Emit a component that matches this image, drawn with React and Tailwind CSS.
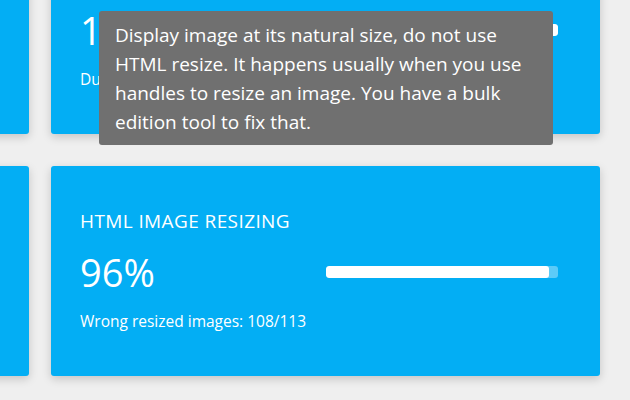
import React from 'react';

const cards = [
  { title: 'DUPLICATE IMAGES', value: '12%', label: 'Duplicate images: 14/113', ratio: 100 },
  { title: 'DUPLICATE IMAGES', value: '12%', label: 'Duplicate images: 14/113', ratio: 100 },
  { title: 'HTML IMAGE RESIZING', value: '96%', label: 'Wrong resized images: 108/113', ratio: 96 },
  { title: 'HTML IMAGE RESIZING', value: '96%', label: 'Wrong resized images: 108/113', ratio: 96 },
];

const StatCard = ({ title, value, label, ratio }) => (
  <div className="h-[210px] bg-[#03aef4] rounded-[3px] shadow-[0_3px_10px_rgba(0,0,0,0.18)] text-white pt-[42px] pl-[29px] pr-[42px]">
    <h3 className="text-[19px] leading-[26px] tracking-[0.4px]">{title}</h3>
    <div className="flex items-start justify-between mt-[15px]">
      <p className="text-[38px] leading-[46px]">{value}</p>
      <div className="w-[232px] h-[12px] mt-[17px] rounded-[3px] bg-[#5ccbf8] overflow-hidden">
        <div className="h-full bg-white rounded-[3px]" style={{ width: `${ratio}%` }} />
      </div>
    </div>
    <p className="text-[15.5px] leading-[20px] mt-[16px]">{label}</p>
  </div>
);

export default function App() {
  return (
    <div className="relative w-[630px] h-[400px] overflow-hidden bg-[#efefef] font-['Open_Sans',sans-serif]">
      <div className="grid grid-cols-[549px_549px] gap-x-[22px] gap-y-[32px] -ml-[520px] -mt-[76px]">
        {cards.map((c, i) => (
          <StatCard key={i} {...c} />
        ))}
      </div>

      <div className="absolute left-[99px] top-[11px] w-[454px] h-[134px] bg-[#707070] rounded-[3px] px-[16px] pt-[10px] pb-[8px] text-white text-[19px] leading-[29px]">
        Display image at its natural size, do not use HTML resize. It happens usually when you use handles to resize an image. You have a bulk edition tool to fix that.
      </div>
    </div>
  );
}
